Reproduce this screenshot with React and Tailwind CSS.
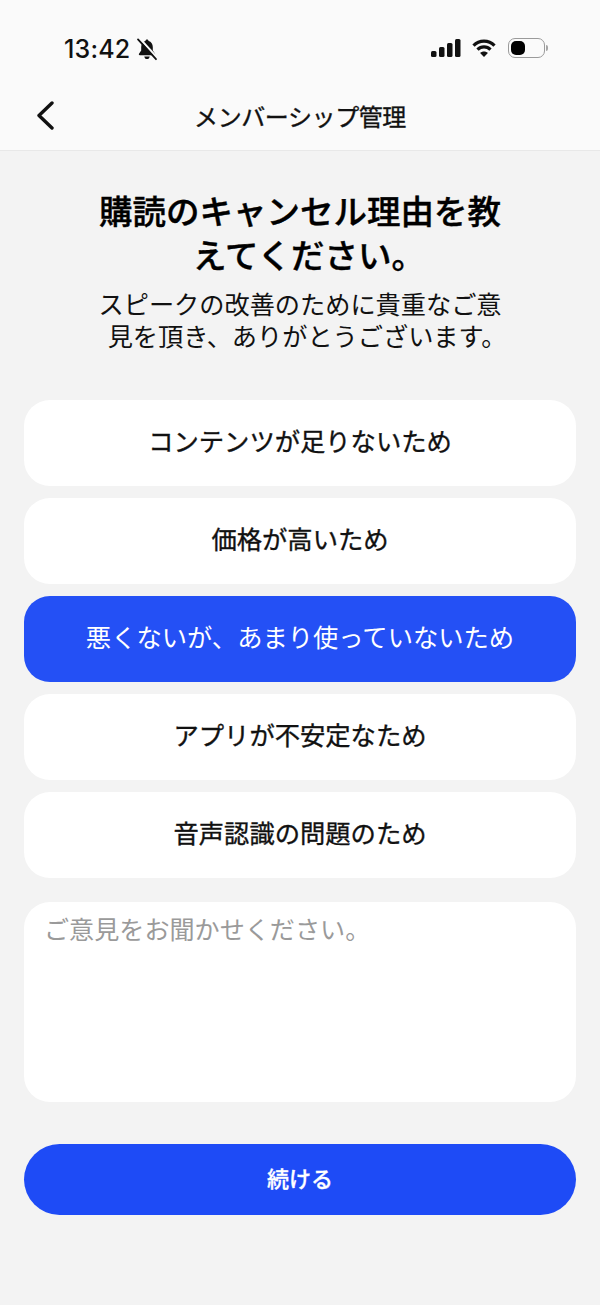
const jp = { fontFamily: '"Noto Sans CJK JP", "Noto Sans", sans-serif' };

const options = [
  ["コンテンツが足りないため", false],
  ["価格が高いため", false],
  ["悪くないが、あまり使っていないため", true],
  ["アプリが不安定なため", false],
  ["音声認識の問題のため", false],
];

function BellOff() {
  return (
    <svg width="22" height="23" viewBox="0 0 22 23" fill="none">
      <path d="M11 1.600c-.9 0-1.500.6-1.600 1.500C6.700 3.900 5.200 6.200 5.200 9v3.400L3 15.800c-.4.7 0 1.500.8 1.500h14.400c.8 0 1.200-.8.800-1.500l-2.200-3.400V9c0-2.800-1.500-5.100-4.200-5.900-.1-.9-.7-1.500-1.600-1.500z" fill="#111" />
      <path d="M8.300 18.400h5.400c-.2 1.600-1.300 2.700-2.700 2.700s-2.500-1.100-2.700-2.700z" fill="#111" />
      <path d="M3.800 0.600 21 19.600" stroke="#fafafa" strokeWidth="2.200" />
      <path d="M2 1.400 20 21.200" stroke="#111" strokeWidth="1.800" strokeLinecap="round" />
    </svg>
  );
}

function StatusIcons() {
  return (
    <div className="flex items-center">
      <svg width="30" height="18" viewBox="0 0 30 18" fill="#111">
        <rect x="0" y="12" width="5.500" height="6" rx="1.500" />
        <rect x="8" y="8" width="5.500" height="10" rx="1.500" />
        <rect x="16" y="4" width="5.500" height="14" rx="1.500" />
        <rect x="24" y="0" width="5.500" height="18" rx="1.500" />
      </svg>
      <svg className="ml-[11px]" width="24" height="18" viewBox="0 0 24 18" fill="none" stroke="#111" strokeWidth="3.200">
        <path d="M1.500 6.600C7.300 .6 16.700 .6 22.500 6.600" />
        <path d="M5.500 10.600C9.200 6.900 14.800 6.900 18.500 10.600" />
        <path d="M12 18 8.100 14c2.200-2 5.600-2 7.800 0z" fill="#111" stroke="none" />
      </svg>
      <div className="flex items-center ml-[12px]">
        <div className="w-[37px] h-[20px] rounded-[7px] border-[1.500px] border-[#9a9a9a] p-[2px] bg-[#fafafa]">
          <div className="w-[14px] h-full rounded-[5px] bg-black" />
        </div>
        <div className="w-[2px] h-[6px] ml-[1px] rounded-r-full bg-[#a5a5a5]" />
      </div>
    </div>
  );
}

export default function App() {
  return (
    <div className="w-[600px] h-[1305px] bg-[#f3f3f3] flex flex-col overflow-hidden" style={jp}>
      <header className="h-[151px] shrink-0 bg-[#fafafa] border-b border-[#e8e8e8] flex flex-col">
        <div className="h-[97px] pt-[33px] pl-[64px] pr-[52px] flex items-start justify-between">
          <div className="flex items-center gap-[6px] h-[32px]">
            <span className="text-[25px] font-medium leading-[32px] text-[#111] tracking-[0.2px]" style={{ fontFamily: '"Inter", sans-serif' }}>13:42</span>
            <BellOff />
          </div>
          <div className="h-[32px] flex items-center mt-[-1px]">
            <StatusIcons />
          </div>
        </div>
        <div className="relative flex-1 flex items-start justify-center">
          <svg className="absolute left-[32px] top-[3px]" width="24" height="30" viewBox="0 0 24 30" fill="none">
            <path d="M20 3 7 15.500 20 28" stroke="#111" strokeWidth="3.400" strokeLinecap="round" strokeLinejoin="round" />
          </svg>
          <h1 className="mt-[1px] text-[24px] leading-[36px] font-normal [-webkit-text-stroke:0.35px_#111] text-[#111] tracking-[-0.4px]">メンバーシップ管理</h1>
        </div>
      </header>

      <section className="pt-[37px] flex flex-col items-center text-center">
        <h2 className="w-[410px] ml-[18px] indent-[-18px] text-[33.500px] leading-[44px] font-medium [-webkit-text-stroke:0.4px_#000] text-black">
          購読のキャンセル理由を教えてください。
        </h2>
        <p className="w-[410px] ml-[14px] indent-[-14px] mt-[11px] text-[25.200px] leading-[32px] text-[#111]">
          スピークの改善のために貴重なご意見を頂き、ありがとうございます。
        </p>
      </section>

      <div className="mt-[49px] px-[24px] flex flex-col gap-[12px]">
        {options.map(([label, selected]) => (
          <button
            key={label}
            className={
              selected
                ? "h-[86px] pb-[4px] rounded-[26px] bg-[#2450f5] text-white text-[25.300px] font-normal flex items-center justify-center"
                : "h-[86px] pb-[4px] rounded-[26px] bg-white text-[#111] text-[25.300px] font-normal [-webkit-text-stroke:0.35px_#111] flex items-center justify-center"
            }
          >
            {label}
          </button>
        ))}
      </div>

      <div className="mt-[24px] mx-[24px] h-[200px] rounded-[26px] bg-white pt-[7px] px-[20px] text-[25.100px] leading-[38px] text-[#9a9a9a]">
        ご意見をお聞かせください。
      </div>

      <button className="mt-[42px] mx-[24px] h-[71px] pb-[4px] rounded-full bg-[#1e4bf6] text-white text-[22px] font-medium [-webkit-text-stroke:0.3px_#fff] flex items-center justify-center">
        続ける
      </button>
    </div>
  );
}
